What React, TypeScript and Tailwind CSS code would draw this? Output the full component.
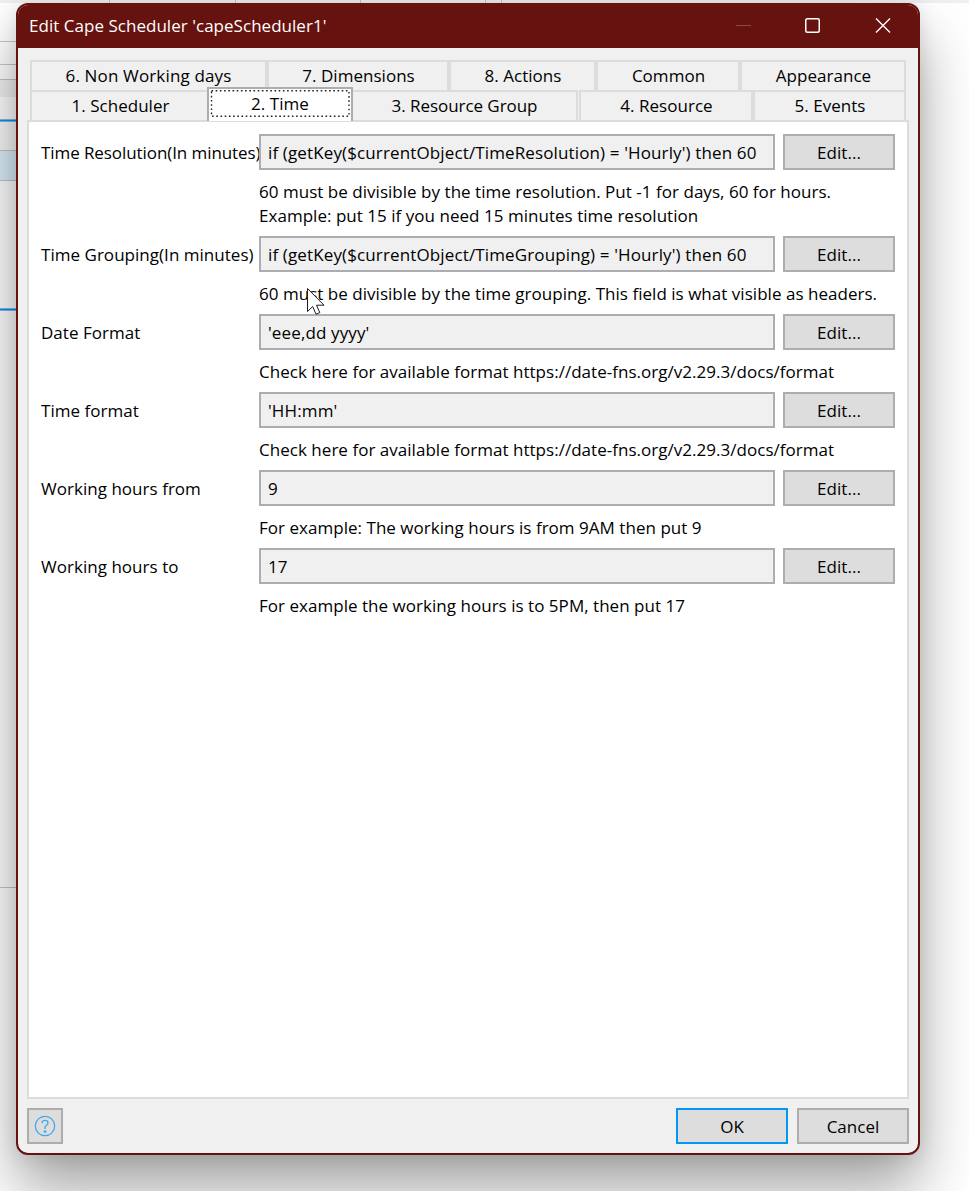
import type { ReactNode } from "react";

type Tab = { label: string; box: string };

const upperTabs: Tab[] = [
  { label: "6. Non Working days", box: "w-[237px] border-l-2 border-r-2 tracking-[0.15px]" },
  { label: "7. Dimensions", box: "w-[182px] border-l-2 border-r-2 pl-px" },
  { label: "8. Actions", box: "w-[147px] border-l-2 border-r-2 pl-px" },
  { label: "Common", box: "w-[144px] border-l-2 border-r-2 pl-px" },
  { label: "Appearance", box: "w-[166px] border-l-2 border-r-2 pl-px" },
];

const fields: { label: string; value: string; help: string[] }[] = [
  {
    label: "Time Resolution(In minutes)",
    value: "if (getKey($currentObject/TimeResolution) = 'Hourly') then 60",
    help: [
      "60 must be divisible by the time resolution. Put -1 for days, 60 for hours.",
      "Example: put 15 if you need 15 minutes time resolution",
    ],
  },
  {
    label: "Time Grouping(In minutes)",
    value: "if (getKey($currentObject/TimeGrouping) = 'Hourly') then 60",
    help: ["60 must be divisible by the time grouping. This field is what visible as headers."],
  },
  {
    label: "Date Format",
    value: "'eee,dd yyyy'",
    help: ["Check here for available format https://date-fns.org/v2.29.3/docs/format"],
  },
  {
    label: "Time format",
    value: "'HH:mm'",
    help: ["Check here for available format https://date-fns.org/v2.29.3/docs/format"],
  },
  {
    label: "Working hours from",
    value: "9",
    help: ["For example: The working hours is from 9AM then put 9"],
  },
  {
    label: "Working hours to",
    value: "17",
    help: ["For example the working hours is to 5PM, then put 17"],
  },
];

function Button({ children, primary = false }: { children: ReactNode; primary?: boolean }) {
  return (
    <button
      className={`flex h-9 w-28 shrink-0 items-center justify-center border-2 bg-[#dddddd] pt-px leading-6 ${
        primary ? "border-[#0099f2]" : "border-[#adadad]"
      }`}
    >
      {children}
    </button>
  );
}

function TabBox({ label, box }: Tab) {
  return (
    <div
      className={`flex h-[30px] shrink-0 items-center justify-center border-t-2 border-[#dcdcdc] bg-[#f0f0f0] leading-6 ${box}`}
    >
      {label}
    </div>
  );
}

function Backdrop() {
  return (
    <div className="absolute inset-0 flex flex-col bg-white">
      <div className="flex h-[3px] shrink-0 bg-[#f0f0f2]">
        <div className="w-[110px] border-r border-[#c4c4c8]" />
        <div className="w-[126px] border-r border-[#c4c4c8]" />
        <div className="w-[125px] border-r border-[#c4c4c8]" />
        <div className="w-[125px] border-r border-[#c4c4c8]" />
        <div className="w-4 border-r border-[#c4c4c8]" />
      </div>
      <div className="flex w-6 flex-col">
        <div className="h-[39px] border-b border-[#c6c6ca]" />
        <div className="h-[23px] border-b border-[#c6c6ca]" />
        <div className="h-[15px] border-b border-[#c6c6ca]" />
        <div className="h-[17px] bg-[#f2f2f2]" />
        <div className="h-[22px]" />
        <div className="h-[3px] border-y border-[#79c1ee] bg-[#0f8fe0]" />
        <div className="h-[29px] border-b border-[#c6c6ca] bg-[#f8f8f8]" />
        <div className="h-[30px] border-b border-[#c6c6ca] bg-[#dceffa]" />
        <div className="h-[127px]" />
        <div className="h-[3px] border-y border-[#79c1ee] bg-[#0f8fe0]" />
        <div className="h-[577px] border-b border-[#c6c6ca]" />
      </div>
    </div>
  );
}

export default function App() {
  return (
    <div className="relative h-[1191px] w-[969px] overflow-hidden font-['Open_Sans','Noto_Sans',sans-serif] text-[17px] tracking-[0.03px] whitespace-nowrap text-black">
      <Backdrop />
      <div className="relative mt-[3px] ml-4 flex h-[1152px] w-[904px] flex-col overflow-hidden rounded-[12px] border-2 border-[#66120f] bg-[#f0f0f0] shadow-[0_34px_60px_rgba(0,0,0,0.36),0_2px_18px_rgba(0,0,0,0.1)]">
        <header className="flex h-[43px] shrink-0 items-center bg-[#66120f] pb-[2px] pl-[11px] text-white">
          <span className="grow leading-6">Edit Cape Scheduler 'capeScheduler1'</span>
          <svg width="156" height="17" viewBox="0 0 156 17" className="mr-[27px]" fill="none">
            <path d="M1 8.5H16" stroke="#8d4a48" />
            <rect x="70.75" y="1.75" width="13.5" height="13.5" rx="1.5" stroke="white" strokeWidth="1.5" />
            <path d="M141 1.5L155 15.5M155 1.5L141 15.5" stroke="white" strokeWidth="1.4" />
          </svg>
        </header>

        <div className="mt-3 ml-3 flex h-[30px]">
          {upperTabs.map((t) => (
            <TabBox key={t.label} {...t} />
          ))}
        </div>
        <div className="ml-3 flex h-[30px]">
          <TabBox label="1. Scheduler" box="w-[177px] border-l-2 pl-[2px]" />
          <div className="relative z-10 -mt-[3px] flex h-[34px] w-[146px] shrink-0 items-center justify-center border-2 border-b-0 border-[#adadad] bg-white pb-[2px] leading-6">
            2. Time
            <svg width="142" height="32" className="absolute top-0 left-0" fill="none">
              <rect x="2.5" y="1.8" width="137.5" height="25.4" stroke="#222222" strokeWidth="1.4" strokeDasharray="1.6 2.6" />
            </svg>
          </div>
          <TabBox label="3. Resource Group" box="w-[225px] border-r-2 tracking-[-0.05px]" />
          <TabBox label="4. Resource" box="ml-px w-[174px] border-l-2 border-r-2 pl-px" />
          <TabBox label="5. Events" box="w-[153px] border-l-2 border-r-2 pl-px" />
        </div>

        <main className="ml-[9px] h-[979px] w-[882px] shrink-0 border-2 border-[#dcdcdc] bg-white pt-3 pl-3">
          {fields.map((f, i) => (
            <section key={f.label} className="mb-2">
              <div className="flex h-9">
                <div className={`w-[218px] shrink-0 pt-[7px] leading-6 ${i === 0 ? "tracking-[-0.08px]" : ""}`}>
                  {f.label}
                </div>
                <div className="relative mr-2 flex w-[516px] shrink-0 items-center border-2 border-[#abadb3] bg-[#f0f0f0] pt-px pl-[7px] leading-6 tracking-[0.13px]">
                  {f.value}
                </div>
                <Button>Edit...</Button>
              </div>
              <div className="mt-[10px] ml-[218px] leading-6">
                {f.help.map((line) => (
                  <p key={line}>{line}</p>
                ))}
              </div>
            </section>
          ))}
        </main>

        <footer className="mt-[9px] ml-[9px] flex w-[882px]">
          <button
            aria-label="Help"
            className="mr-auto flex size-9 items-center justify-center border-2 border-[#adadad] bg-[#dddddd]"
          >
            <svg width="22" height="22" viewBox="0 0 22 22" fill="none" stroke="#43a9ee" strokeWidth="1.3" className="mr-px mb-px">
              <circle cx="11" cy="11" r="9.7" />
              <path d="M8 8.3C8 6.5 9.2 5.4 11 5.4S14 6.5 14 8.1C14 10.3 11 10.4 11 12.6V14" />
              <circle cx="11" cy="16.6" r="1" fill="#43a9ee" stroke="#43a9ee" strokeWidth="0.8" />
            </svg>
          </button>
          <Button primary>OK</Button>
          <div className="ml-[9px]">
            <Button>Cancel</Button>
          </div>
        </footer>
      </div>

      <svg width="20" height="29" viewBox="0 0 20 29" className="absolute top-[287px] left-[306px]">
        <path
          d="M1.5 1.5V24.5L6.7 19.5L10 27.2L13.8 25.6L10.5 18.2H18Z"
          fill="white"
          stroke="#1b1b2b"
          strokeWidth="1"
        />
      </svg>
    </div>
  );
}
